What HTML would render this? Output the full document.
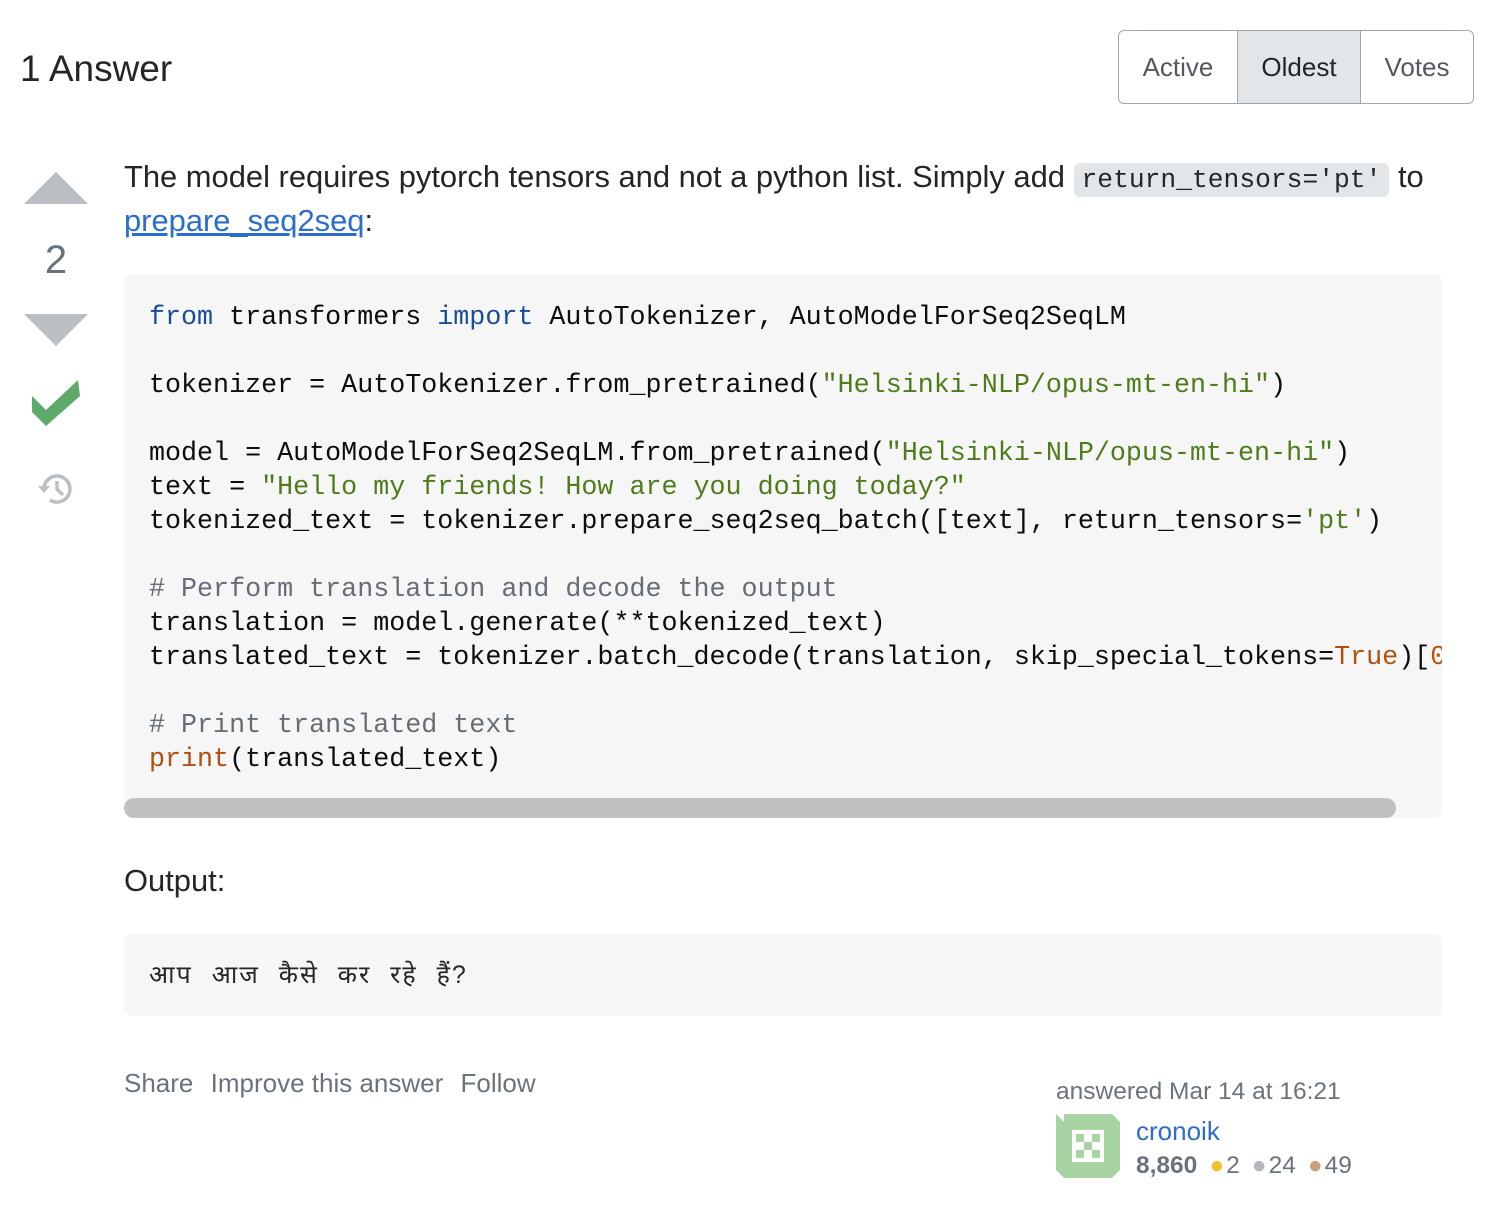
<!DOCTYPE html>
<html><head><meta charset="utf-8"><style>
body{margin:0;width:1496px;height:1210px;background:#fff;font-family:"Liberation Sans",sans-serif;color:#232629;position:relative;overflow:hidden}
.abs{position:absolute}
h1{position:absolute;left:20px;top:48px;margin:0;font-weight:normal;font-size:37px;color:#232629}
.tabs{position:absolute;left:1118px;top:30px;height:72px;border:1.5px solid #9fa6ad;border-radius:6px;display:flex;overflow:hidden;font-size:26px;color:#525960}
.tabs div{display:flex;align-items:center;justify-content:center;border-left:1.5px solid #9fa6ad}
.tabs div:first-child{border-left:none}
.t{position:absolute;left:124px;font-size:30.9px;line-height:44px}
code.i{font-family:"Liberation Mono",monospace;font-size:26.3px;background:#e3e6e8;padding:2px 8px;border-radius:6px}
a{color:#2b6dcc;text-decoration:underline}
pre{position:absolute;left:124px;top:274px;width:1318px;height:544px;margin:0;background:#f6f6f6;border-radius:8px;overflow:hidden;font-family:"Liberation Mono",monospace;font-size:26.7px;line-height:34px;color:#0c0d0e}
.code{position:absolute;left:25px;top:27px;white-space:pre}
.k{color:#1a4d99}.s{color:#4f7c1a}.c{color:#656e77}.n{color:#b0510e}
.sb{position:absolute;left:0;top:524px;width:1272px;height:20px;background:#c1c1c1;border-radius:10px}
.out{position:absolute;left:124px;top:934px;width:1318px;height:82px;background:#f6f6f6;border-radius:8px;font-family:"Liberation Sans","Noto Sans CJK SC",sans-serif;font-size:25px;line-height:82px;padding-left:25px;box-sizing:border-box;word-spacing:10px;letter-spacing:2px}
.menu{position:absolute;left:124px;top:1068px;font-size:26px;color:#6a737c}
.menu span{margin-right:10px}
.st span.d{margin-left:12px;margin-right:2px}
</style></head><body>
<h1>1 Answer</h1>
<div class="tabs"><div style="width:118px">Active</div><div style="width:122px;background:#e3e6e8;color:#232629">Oldest</div><div style="width:112px">Votes</div></div>

<svg class="abs" style="left:24px;top:172px" width="64" height="32"><path d="M0 32L32 0L64 32Z" fill="#babfc4"/></svg>
<div class="abs" style="left:0;top:238px;width:112px;text-align:center;font-size:40px;color:#6a737c">2</div>
<svg class="abs" style="left:24px;top:314px" width="64" height="32"><path d="M0 0L64 0L32 32Z" fill="#babfc4"/></svg>
<svg class="abs" style="left:30px;top:378px" width="52" height="50"><path d="M2 18L16 32L48 2L50 18L16 48L2 34Z" fill="#5eaa6a"/></svg>
<svg class="abs" style="left:36px;top:470px" width="40" height="36" fill="none" stroke="#babfc4" stroke-width="3.5"><path d="M8 20A13 13 0 1 1 14 30"/><path d="M2 16L8 23L14 16" fill="#babfc4" stroke="none"/><path d="M21 11V19L27 25"/></svg>

<div class="t" style="top:155px">The model requires pytorch tensors and not a python list. Simply add <code class="i">return_tensors='pt'</code> to</div>
<div class="t" style="top:199px"><a>prepare_seq2seq</a>:</div>

<pre><div class="code"><span class="k">from</span> transformers <span class="k">import</span> AutoTokenizer, AutoModelForSeq2SeqLM

tokenizer = AutoTokenizer.from_pretrained(<span class="s">"Helsinki-NLP/opus-mt-en-hi"</span>)

model = AutoModelForSeq2SeqLM.from_pretrained(<span class="s">"Helsinki-NLP/opus-mt-en-hi"</span>)
text = <span class="s">"Hello my friends! How are you doing today?"</span>
tokenized_text = tokenizer.prepare_seq2seq_batch([text], return_tensors=<span class="s">'pt'</span>)

<span class="c"># Perform translation and decode the output</span>
translation = model.generate(**tokenized_text)
translated_text = tokenizer.batch_decode(translation, skip_special_tokens=<span class="n">True</span>)[<span class="n">0</span>]

<span class="c"># Print translated text</span>
<span class="n">print</span>(translated_text)</div><div class="sb"></div></pre>

<div class="t" style="top:859px">Output:</div>
<div class="out">आप आज कैसे कर रहे हैं?</div>

<div class="menu"><span>Share</span> <span>Improve this answer</span> <span>Follow</span></div>

<div class="abs" style="left:1056px;top:1078px;font-size:24.5px;color:#6a737c">answered Mar 14 at 16:21</div>
<svg class="abs" style="left:1056px;top:1114px" width="64" height="64"><rect width="64" height="64" fill="#a8d4a4"/><rect x="16" y="16" width="32" height="32" fill="#fff"/><path d="M20 20h8v8h-8zM36 20h8v8h-8zM20 36h8v8h-8zM36 36h8v8h-8zM28 28h8v8h-8z" fill="#a8d4a4"/><path d="M0 0h8v8zM56 0l8 8V0zM0 56l8 8H0zM64 56l-8 8h8z" fill="#fff"/></svg>
<div class="abs" style="left:1136px;top:1116px;font-size:26px;color:#2b6dcc">cronoik</div>
<div class="abs st" style="left:1136px;top:1152px;font-size:24.5px;color:#6a737c"><b>8,860</b><span class="d" style="color:#f1c230">●</span>2<span class="d" style="color:#b4b8bc">●</span>24<span class="d" style="color:#c9a07c">●</span>49</div>
</body></html>
